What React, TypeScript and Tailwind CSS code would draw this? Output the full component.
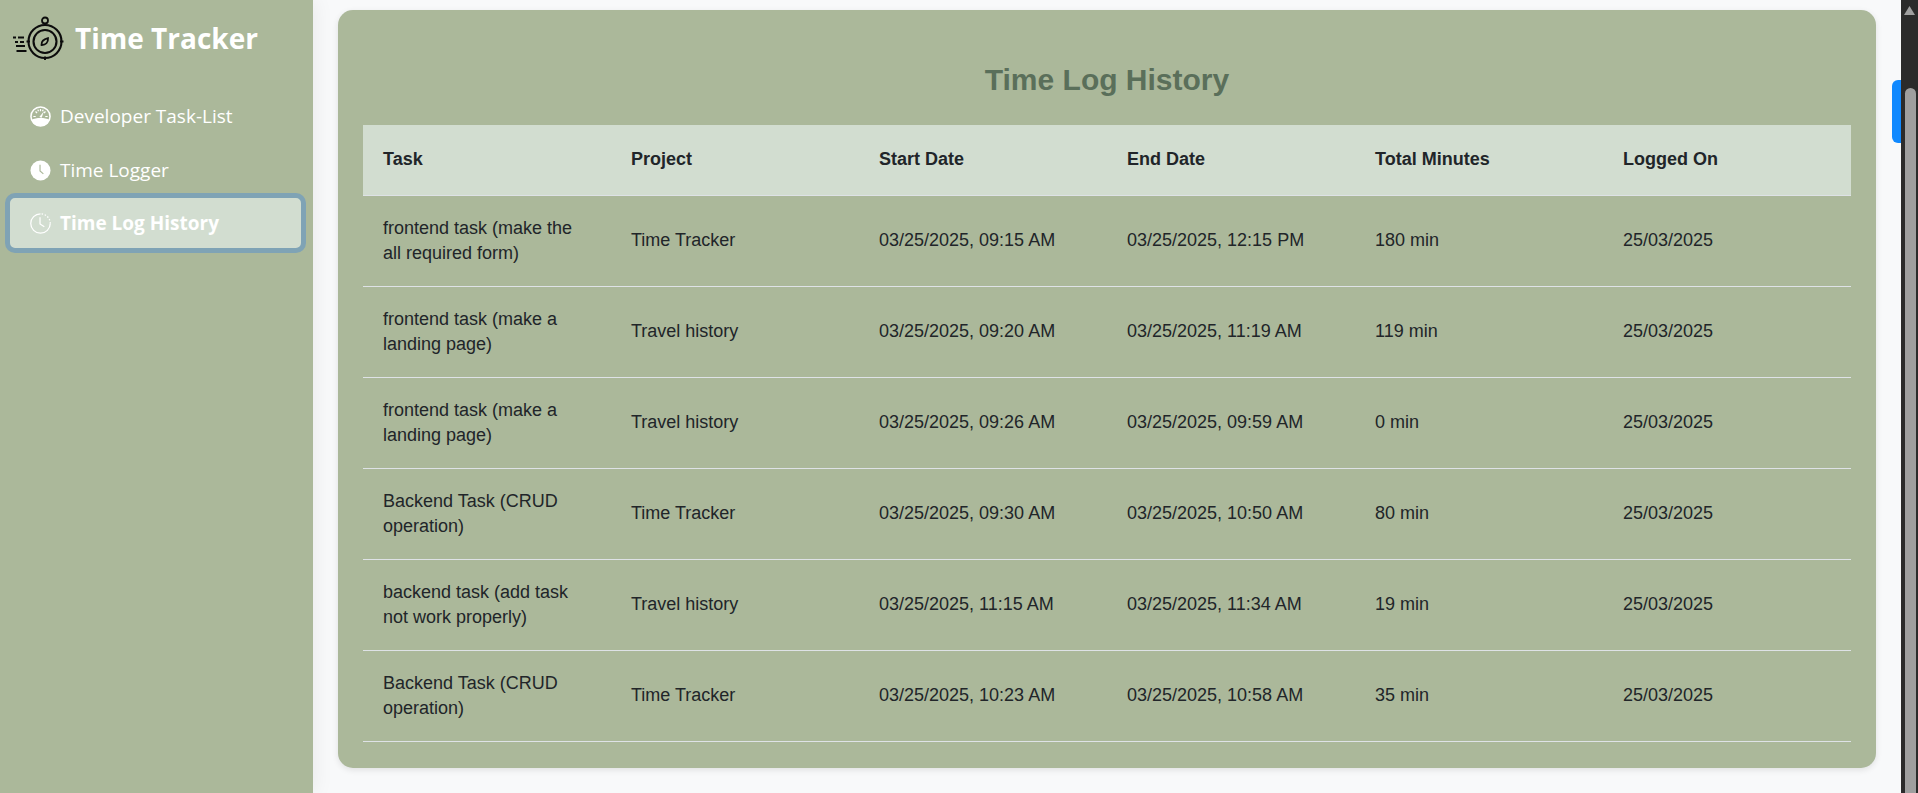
import React from 'react';

const logs = [
  { task: 'frontend task (make the all required form)', project: 'Time Tracker', start: '03/25/2025, 09:15 AM', end: '03/25/2025, 12:15 PM', total: '180 min', logged: '25/03/2025' },
  { task: 'frontend task (make a landing page)', project: 'Travel history', start: '03/25/2025, 09:20 AM', end: '03/25/2025, 11:19 AM', total: '119 min', logged: '25/03/2025' },
  { task: 'frontend task (make a landing page)', project: 'Travel history', start: '03/25/2025, 09:26 AM', end: '03/25/2025, 09:59 AM', total: '0 min', logged: '25/03/2025' },
  { task: 'Backend Task (CRUD operation)', project: 'Time Tracker', start: '03/25/2025, 09:30 AM', end: '03/25/2025, 10:50 AM', total: '80 min', logged: '25/03/2025' },
  { task: 'backend task (add task not work properly)', project: 'Travel history', start: '03/25/2025, 11:15 AM', end: '03/25/2025, 11:34 AM', total: '19 min', logged: '25/03/2025' },
  { task: 'Backend Task (CRUD operation)', project: 'Time Tracker', start: '03/25/2025, 10:23 AM', end: '03/25/2025, 10:58 AM', total: '35 min', logged: '25/03/2025' },
];

const headers = ['Task', 'Project', 'Start Date', 'End Date', 'Total Minutes', 'Logged On'];

const LogoIcon = () => (
  <svg width="52" height="44" viewBox="0 0 52 44" fill="none" stroke="#0c0c0c" strokeWidth="1.9">
    <circle cx="32" cy="25.5" r="16.500" strokeWidth="2.100" />
    <circle cx="32" cy="25.5" r="11.500" strokeWidth="2.100" />
    <circle cx="32" cy="4.500" r="3" strokeWidth="1.800" />
    <path d="M32 7.500V9M13.500 25.500H17M47 25.500h3.500M32 40.500V44" />
    <path d="M28.500 29c-.2-3.200 2.300-5.800 6.500-6.800.3 4.200-2.200 7-6.500 6.800z" strokeWidth="1.800" />
    <path d="M0 21.500h3M5 21.500h6M2 26h3M7 26h4M3 30h9M3.500 35h10" />
  </svg>
);

const GaugeIcon = () => (
  <svg width="21" height="21" viewBox="0 0 22 22">
    <circle cx="11" cy="11" r="10" fill="none" stroke="#fff" strokeWidth="1.600" />
    <path d="M1.500 14.500c5-2.400 14-2.400 19 0A10.200 10.200 0 0 1 1.500 14.500z" fill="#fff" />
    <path d="M3.500 11h2.500M16 11h2.500M5.800 5.800l1.600 1.600M16.200 5.800l-1.600 1.600M11 3.200v2.300M8.200 3.800l.7 1.800M13.800 3.800l-.7 1.800" stroke="#fff" strokeWidth="1.300" fill="none" />
    <path d="M9.800 11.500L14.600 5.500l-2.400 6.900z" fill="#fff" />
  </svg>
);

const ClockSolidIcon = () => (
  <svg width="21" height="21" viewBox="0 0 22 22">
    <circle cx="11" cy="11" r="10.500" fill="#fff" />
    <path d="M10.500 5v6.500l3.500 3" stroke="#abb89a" strokeWidth="1.200" fill="none" />
  </svg>
);

const ClockHistoryIcon = () => (
  <svg width="21" height="21" viewBox="0 0 22 22" fill="none" stroke="#fff" strokeWidth="1.300">
    <path d="M11 .8A10.200 10.200 0 1 0 21.200 11" />
    <path d="M21.200 11A10.200 10.200 0 0 0 11 .8" strokeDasharray="1.500 1.800" />
    <path d="M10.500 4.500v7l4.500 3" />
  </svg>
);

const NavItem = ({ icon, label, active }: { icon: React.ReactNode; label: string; active?: boolean }) => (
  <div
    className={
      active
        ? 'mt-[-4px] flex h-[60px] items-center gap-[9px] rounded-[10px] border-[5px] border-[#7fa3b5] bg-[#d2ddd0] pl-[20px] text-[19px] font-bold text-white'
        : 'flex h-[54px] items-center gap-[9px] pl-[25px] text-[19px] text-white'
    }
  >
    {icon}
    <span>{label}</span>
  </div>
);

export default function App() {
  return (
    <div className="flex h-[793px] w-full overflow-hidden bg-[#f8f9fa] font-['Liberation_Sans',Arial,sans-serif]">
      <aside className="relative z-10 h-full w-[313px] shrink-0 bg-[#abb89a] pr-[7px] pl-[5px] font-['Open_Sans','Noto_Sans',sans-serif] shadow-[0_0_20px_rgba(0,0,0,0.08)]">
        <div className="flex items-center gap-[10px] pt-[16px] pl-[8px]">
          <LogoIcon />
          <h1 className="text-[28px] leading-[44px] font-bold text-white">Time Tracker</h1>
        </div>
        <nav className="mt-[29px] flex flex-col">
          <NavItem icon={<GaugeIcon />} label="Developer Task-List" />
          <NavItem icon={<ClockSolidIcon />} label="Time Logger" />
          <NavItem icon={<ClockHistoryIcon />} label="Time Log History" active />
        </nav>
      </aside>

      <main className="relative min-w-0 flex-1 pt-[10px] pr-[25px] pl-[25px]">
        <div className="h-[758px] rounded-[15px] bg-[#abb89a] px-[25px] pt-[50px] shadow-[0_2px_6px_rgba(0,0,0,0.1)]">
          <h2 className="mb-[26px] text-center text-[30px] leading-[39px] font-bold text-[#5a6f5a]">Time Log History</h2>
          <table className="w-full table-fixed border-collapse text-[18px] leading-[25px] text-[#212529]">
            <thead>
              <tr className="h-[70px] border-b border-[#dee2e6] bg-[#d2ddd0]">
                {headers.map((h) => (
                  <th key={h} className="px-[20px] text-left font-bold">{h}</th>
                ))}
              </tr>
            </thead>
            <tbody>
              {logs.map((log, i) => (
                <tr key={i} className="h-[91px] border-b border-[#dee2e6]">
                  <td className="px-[20px]">{log.task}</td>
                  <td className="px-[20px]">{log.project}</td>
                  <td className="px-[20px]">{log.start}</td>
                  <td className="px-[20px]">{log.end}</td>
                  <td className="px-[20px]">{log.total}</td>
                  <td className="px-[20px]">{log.logged}</td>
                </tr>
              ))}
            </tbody>
          </table>
        </div>
        <div className="absolute top-[80px] right-0 h-[63px] w-[9px] rounded-l-[6px] bg-[#1089ff]" />
      </main>

      <div className="relative h-full w-[17px] shrink-0 bg-[#2b2b2b]">
        <svg className="absolute top-[6px] left-[3px]" width="11" height="10" viewBox="0 0 11 10">
          <path d="M5.500 0L11 9H0z" fill="#a0a0a0" />
        </svg>
        <div className="absolute top-[88px] right-[2px] bottom-0 left-[4px] rounded-t-[6px] bg-[#9f9f9f]" />
      </div>
    </div>
  );
}
